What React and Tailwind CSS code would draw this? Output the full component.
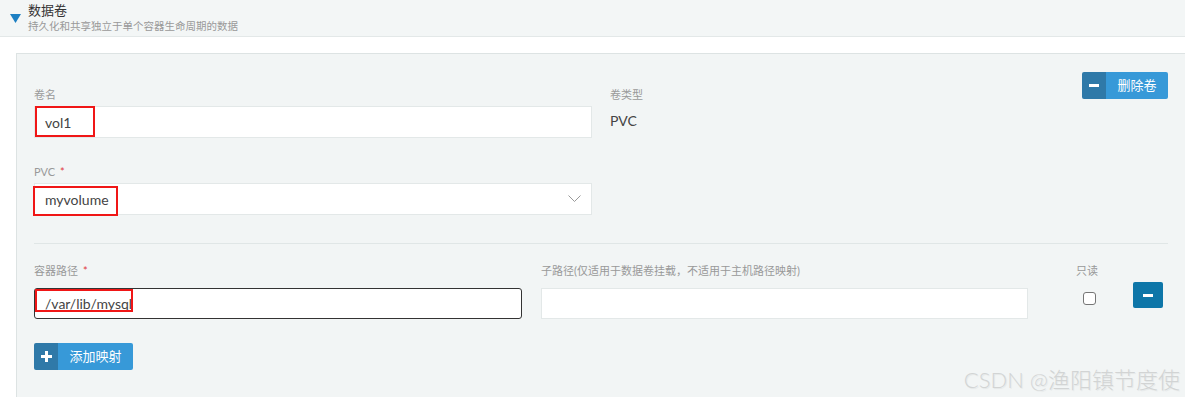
import React from "react";

const font = { fontFamily: 'Lato, "Noto Sans CJK SC", sans-serif' };

function Label({ children, required }) {
  return (
    <div className="h-[18px] whitespace-nowrap text-[11px] leading-[18px] text-[#999]">
      {children}
      {required && <span className="ml-[5px] text-[#e0393e]">*</span>}
    </div>
  );
}

function SplitButton({ icon, text, className }) {
  return (
    <button className={`flex h-[27px] items-stretch overflow-hidden rounded-[2px] text-[13px] text-white ${className}`}>
      <span className="flex w-[24px] shrink-0 items-center justify-center bg-[#2f79a8]">{icon}</span>
      <span className="flex flex-1 items-center justify-center whitespace-nowrap bg-[#3799d8]">{text}</span>
    </button>
  );
}

const Minus = () => <span className="block h-[3px] w-[10px] bg-white" />;
const Plus = () => (
  <svg width="11" height="11" viewBox="0 0 11 11">
    <rect x="4" y="0" width="3" height="11" fill="white" />
    <rect x="0" y="4" width="11" height="3" fill="white" />
  </svg>
);

export default function App() {
  return (
    <div className="h-[397px] w-[1185px] overflow-hidden bg-white" style={font}>
      <div className="flex h-[37px] items-start border-b border-[#e3e8e8] bg-[#f3f6f6] pl-[10px] pt-[2px]">
        <svg width="11" height="9" viewBox="0 0 11 9" className="mt-[12px] mr-[7px]">
          <polygon points="0,0 11,0 5.5,9" fill="#1d80c3" />
        </svg>
        <div>
          <div className="text-[13px] leading-[17px] text-[#333]">数据卷</div>
          <div className="text-[10.5px] leading-[14px] text-[#999]">持久化和共享独立于单个容器生命周期的数据</div>
        </div>
      </div>

      <div className="ml-[16px] mt-[16px] border-l border-t border-[#dde3e3] bg-[#f2f5f5] pl-[17px] pr-[17px] pt-[18px] pb-[40px]">
        <div className="flex">
          <div className="w-[558px] pt-[14px]">
            <Label>卷名</Label>
            <div className="relative mt-[2px] flex h-[32px] items-center border border-[#e3e8e8] bg-white pl-[10px] text-[14px] text-[#444]">
              vol1
              <span className="absolute left-[0px] top-[-1px] h-[31px] w-[60px] border-2 border-[#f01616]" />
            </div>
            <div className="mt-[25px]">
              <Label required>PVC</Label>
            </div>
            <div className="relative mt-[2px] flex h-[32px] items-center justify-between border border-[#e3e8e8] bg-white pl-[10px] pr-[10px] text-[14px] text-[#444]">
              myvolume
              <svg width="13" height="8" viewBox="0 0 13 8">
                <polyline points="0.5,0.5 6.5,6.5 12.5,0.5" fill="none" stroke="#999" strokeWidth="1" />
              </svg>
              <span className="absolute left-[-2px] top-[2px] h-[30px] w-[85px] border-2 border-[#f01616]" />
            </div>
          </div>
          <div className="ml-[18px] flex-1 pt-[14px]">
            <Label>卷类型</Label>
            <div className="mt-[6px] text-[14px] text-[#444]">PVC</div>
          </div>
          <SplitButton icon={<Minus />} text="删除卷" className="w-[86px]" />
        </div>

        <div className="mt-[28px] border-t border-[#e0e6e6]" />

        <div className="mt-[18px] flex">
          <div className="w-[488px]">
            <Label required>容器路径</Label>
            <div className="relative mt-[8px] flex h-[31px] items-center rounded-[3px] border border-[#333] bg-white pl-[10px] text-[14px] text-[#444]">
              /var/lib/mysql
              <span className="absolute left-[0px] top-[0px] h-[23px] w-[98px] border-2 border-[#f01616]" />
            </div>
          </div>
          <div className="ml-[19px] w-[487px]">
            <Label>子路径(仅适用于数据卷挂载，不适用于主机路径映射)</Label>
            <div className="mt-[8px] h-[31px] border border-[#e3e8e8] bg-white" />
          </div>
          <div className="ml-[48px] w-[40px]">
            <Label>只读</Label>
            <div className="mt-[12px] ml-[7px] h-[13px] w-[13px] rounded-[3px] border border-[#767676] bg-white" />
          </div>
          <div className="ml-[17px] pt-[20px]">
            <button className="flex h-[26px] w-[30px] items-center justify-center rounded-[2px] bg-[#0e76a8]">
              <Minus />
            </button>
          </div>
        </div>

        <div className="mt-[24px] flex items-end justify-between">
          <SplitButton icon={<Plus />} text="添加映射" className="w-[99px]" />
          <div
            className="mr-[-12px] mb-[-26px] whitespace-nowrap text-[22px] font-light text-[#d2d4d4]"
            style={{ textShadow: "1px 1px 1px rgba(0,0,0,0.06)" }}
          >
            CSDN @渔阳镇节度使
          </div>
        </div>
      </div>
    </div>
  );
}
